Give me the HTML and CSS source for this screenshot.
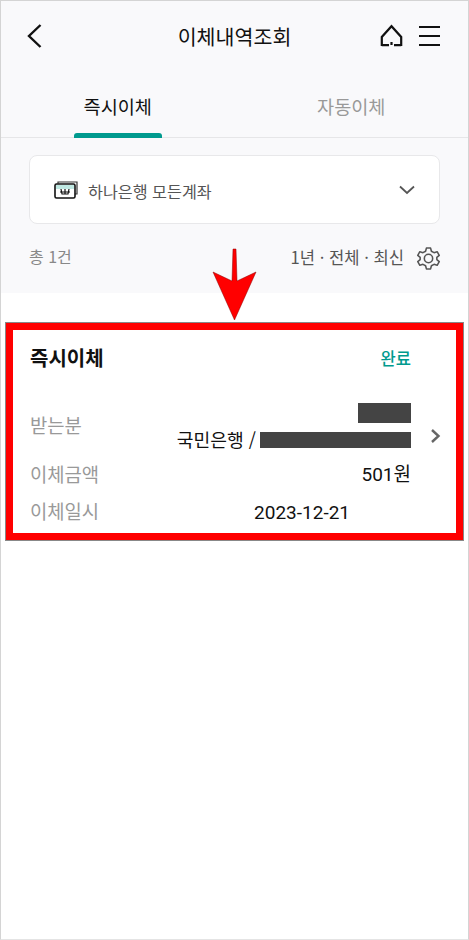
FILE: index.html
```html
<!DOCTYPE html>
<html lang="ko">
<head>
    <meta charset="UTF-8">
    <meta name="viewport" content="width=device-width, initial-scale=1.0">
    <title>이체내역조회</title>
    <link rel="stylesheet" href="styles.css">
</head>
<body>
    <div class="screen">
        <div class="top-area">
            <header class="app-bar">
                <svg class="icon-back" width="18" height="26" viewBox="0 0 18 26">
                    <path d="M14.5 2 L3 13 L14.5 24" fill="none" stroke="#111" stroke-width="2.4"/>
                </svg>
                <h1>이체내역조회</h1>
                <div class="app-actions">
                    <svg width="24" height="24" viewBox="0 0 24 24">
                        <path d="M1.8 22 V13 L11.5 2.2 L21.2 13 V22 M1.8 21.2 H9 M14 21.2 H21.2 M11.5 18 V21" fill="none" stroke="#111" stroke-width="2.2"/>
                    </svg>
                    <svg width="22" height="22" viewBox="0 0 22 22">
                        <path d="M1 2 H22 M1 11 H22 M1 20 H22" fill="none" stroke="#111" stroke-width="2"/>
                    </svg>
                </div>
            </header>

            <nav class="tabs">
                <div class="tab active">즉시이체</div>
                <div class="tab">자동이체</div>
            </nav>

            <div class="filter-area">
                <div class="account-select">
                    <svg width="24" height="20" viewBox="0 0 24 20">
                        <path d="M4 3.5 V2 H23 V14 H21" fill="#fff" stroke="#333" stroke-width="1.2"/>
                        <rect x="1" y="4" width="20" height="14" rx="1.5" fill="#fff" stroke="#111" stroke-width="1.6"/>
                        <rect x="2" y="5" width="18" height="4" fill="#bfe8e2"/>
                        <path d="M7 9 L8 14 H14 L15 9 M11 9 V14 M6 12 H16" fill="none" stroke="#111" stroke-width="1.2"/>
                    </svg>
                    <span class="account-name">하나은행 모든계좌</span>
                    <svg class="icon-down" width="16" height="10" viewBox="0 0 16 10">
                        <path d="M1 1.5 L8 8 L15 1.5" fill="none" stroke="#555" stroke-width="1.8"/>
                    </svg>
                </div>
                <div class="summary">
                    <span class="count">총 1건</span>
                    <div class="summary-right">
                        <span class="sort-text">1년 · 전체 · 최신</span>
                        <svg class="icon-gear" width="25" height="25" viewBox="0 0 24 24">
                            <path d="M10 2 H14 L14.8 5 L17.3 6.4 L20.3 5.5 L22.3 9 L20 11 V13 L22.3 15 L20.3 18.5 L17.3 17.6 L14.8 19 L14 22 H10 L9.2 19 L6.7 17.6 L3.7 18.5 L1.7 15 L4 13 V11 L1.7 9 L3.7 5.5 L6.7 6.4 L9.2 5 Z" fill="none" stroke="#555" stroke-width="1.5" stroke-linejoin="round"/>
                            <circle cx="12" cy="12" r="4" fill="none" stroke="#555" stroke-width="1.5"/>
                        </svg>
                    </div>
                </div>
            </div>
        </div>

        <section class="card">
            <div class="card-head">
                <strong>즉시이체</strong>
                <span class="status">완료</span>
            </div>
            <div class="card-body">
                <div class="rows">
                    <div class="row row-to">
                        <span class="label">받는분</span>
                        <div class="to-value">
                            <span class="mask mask-name"></span>
                            <div class="to-account">국민은행 / <span class="mask mask-account"></span></div>
                        </div>
                    </div>
                    <div class="row">
                        <span class="label">이체금액</span>
                        <span class="value">501원</span>
                    </div>
                    <div class="row">
                        <span class="label">이체일시</span>
                        <span class="value value-date">2023-12-21</span>
                    </div>
                </div>
                <svg class="icon-next" width="11" height="16" viewBox="0 0 11 16">
                    <path d="M2 2 L8.5 8 L2 14" fill="none" stroke="#666" stroke-width="2.4"/>
                </svg>
            </div>
        </section>

        <!-- 빨간 화살표 표시 -->
        <svg class="arrow" width="46" height="74" viewBox="0 0 46 74">
            <path d="M22 1 H25 L26 33 L45 24 L23.5 72 L2 24 L21 33 Z" fill="#f00" stroke="#800" stroke-width="0.5"/>
        </svg>
    </div>
</body>
</html>
```

FILE: styles.css
```css
* {
    box-sizing: border-box;
    margin: 0;
    padding: 0;
}

body {
    font-family: "Noto Sans CJK KR", "Roboto", sans-serif;
    background-color: white;
    color: #111;
}

.screen {
    position: relative;
    height: 940px;
    border: 1px solid #d4d4d4;
    border-bottom-color: #e4e4e4;
}

.top-area {
    height: 292px;
    background-color: #f9f9fb;
}

.app-bar {
    display: flex;
    align-items: center;
    justify-content: space-between;
    height: 70px;
    padding: 0 28px 0 25px;
    position: relative;
}

.app-bar h1 {
    position: absolute;
    left: 0;
    right: 0;
    top: 20px;
    text-align: center;
    font-size: 20.6px;
    line-height: 30px;
    font-weight: 400;
}

.app-actions {
    display: flex;
    align-items: center;
    gap: 14px;
}

.tabs {
    display: flex;
    height: 67px;
    border-bottom: 1px solid #e6e6e8;
}

.tab {
    flex: 1;
    padding-top: 20px;
    text-align: center;
    font-size: 18.6px;
    line-height: 30px;
    color: #999;
}

.tab.active {
    position: relative;
    color: #111;
}

.tab.active::after {
    content: "";
    position: absolute;
    left: 73px;
    bottom: -1px;
    width: 88px;
    height: 5px;
    background-color: #009a8e;
    border-radius: 3px 3px 0 0;
}

.filter-area {
    padding: 17px 28px 0;
}

.account-select {
    display: flex;
    align-items: center;
    gap: 10px;
    height: 69px;
    padding: 0 24px;
    background-color: white;
    border: 1px solid #e8e8ea;
    border-radius: 8px;
}

.account-name {
    flex: 1;
    margin-top: 2px;
    font-size: 16.2px;
    color: #555;
}

.summary {
    display: flex;
    align-items: center;
    justify-content: space-between;
    margin-top: 21px;
    height: 26px;
    font-size: 16.6px;
    color: #555;
}

.count {
    margin-bottom: 4px;
    font-size: 16px;
    color: #888;
}

.sort-text {
    margin-bottom: 2px;
}

.summary-right {
    display: flex;
    align-items: center;
    gap: 12px;
}

.icon-gear {
    margin-right: -1px;
}

/* 빨간 테두리 카드 */
.card {
    margin: 29px 4px 0;
    height: 219px;
    border: 8px solid #f00;
    outline: 1px solid #888;
    outline-offset: -1px;
    padding: 13px 15px 0 17px;
    background-color: white;
}

.card-head {
    display: flex;
    align-items: center;
    justify-content: space-between;
    padding-right: 30px;
    font-size: 20px;
    line-height: 30px;
}

.card-head strong {
    font-weight: 700;
}

.status {
    font-size: 16.6px;
    font-weight: 500;
    color: #009a8e;
}

.card-body {
    display: flex;
    align-items: flex-start;
    gap: 19px;
    margin-top: 24px;
}

.icon-next {
    margin-top: 31px;
}

.rows {
    flex: 1;
}

.row {
    display: flex;
    justify-content: space-between;
    align-items: center;
    height: 37px;
    font-size: 18.8px;
    line-height: 26px;
}

.row-to {
    height: 57px;
    margin-bottom: 2px;
}

.label {
    margin-bottom: 2px;
    color: #999;
}

.to-value {
    display: flex;
    flex-direction: column;
    align-items: flex-end;
    gap: 9px;
}

.to-account {
    display: flex;
    align-items: flex-start;
    gap: 4px;
    font-size: 18.2px;
    line-height: 14px;
}

.mask {
    display: block;
    background-color: #444;
}

.mask-name {
    width: 53px;
    height: 20px;
}

.mask-account {
    width: 151px;
    height: 16px;
}

.value {
    font-family: "Roboto", "Noto Sans CJK KR", sans-serif;
    font-size: 19px;
}

.value-date {
    margin-top: 2px;
    margin-right: 61px;
}

.arrow {
    position: absolute;
    left: 210px;
    top: 247px;
}
```
